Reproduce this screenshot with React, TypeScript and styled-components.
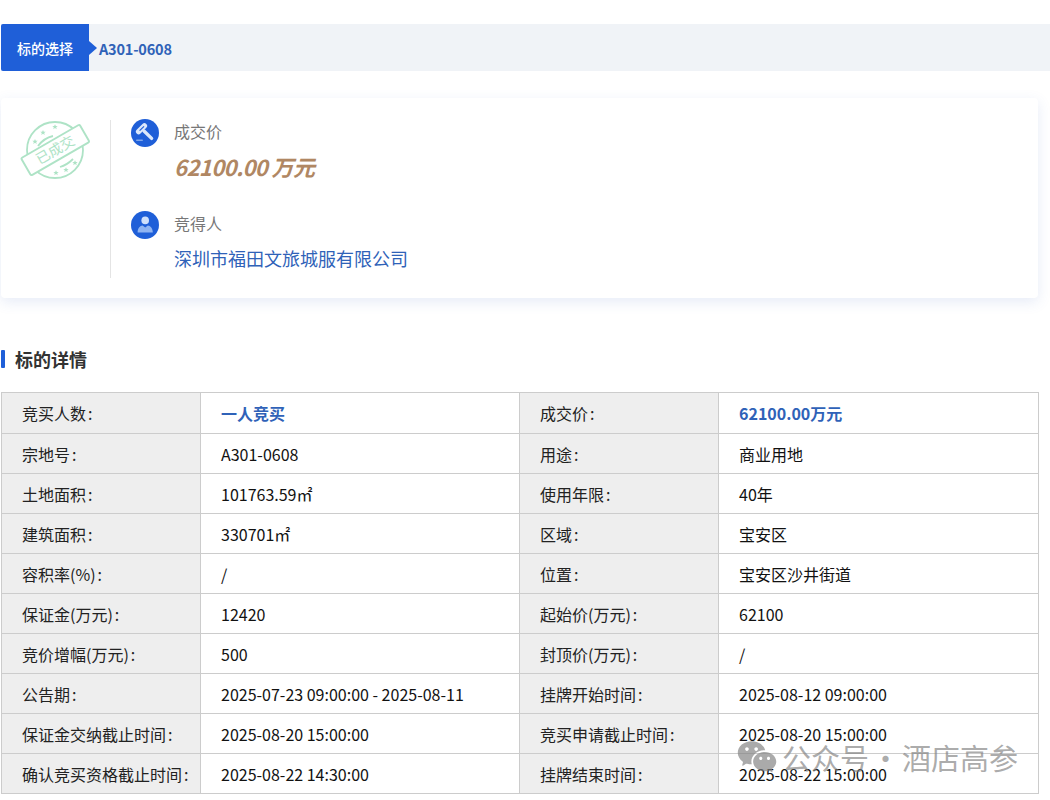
import React, { FC } from "react";
import styled, { createGlobalStyle } from "styled-components";
import { RiWechatFill } from "react-icons/ri";

const GlobalStyle = createGlobalStyle`
  html, body {
    margin: 0;
    padding: 0;
    background: #fff;
    font-family: "Noto Sans CJK SC", "Noto Sans", sans-serif;
  }
`;

const Page = styled.div`
  position: relative;
  width: 1050px;
  height: 800px;
  box-sizing: border-box;
  padding: 24px 0 0 1px;
  overflow: hidden;
`;

const TabBar = styled.div`
  display: flex;
  align-items: center;
  height: 47px;
  background: #f0f3f7;
`;

const TabLabel = styled.div`
  position: relative;
  display: flex;
  align-items: center;
  justify-content: center;
  width: 88px;
  height: 100%;
  background: #1f5fd8;
  border-radius: 2px 0 0 2px;
  color: #fff;
  font-size: 14px;
  font-weight: 500;
  &::after {
    content: "";
    position: absolute;
    left: 100%;
    top: 50%;
    margin-top: -7px;
    border-left: 8px solid #1f5fd8;
    border-top: 7px solid transparent;
    border-bottom: 7px solid transparent;
  }
`;

const TabValue = styled.div`
  margin: 2px 0 0 10px;
  color: #2f62b8;
  font-size: 14.5px;
  font-weight: 700;
  letter-spacing: -0.2px;
`;

const ResultCard = styled.div`
  display: flex;
  width: 1037px;
  height: 200px;
  margin-top: 27px;
  box-sizing: border-box;
  padding: 22px 0 20px;
  background: #fff;
  border-radius: 4px;
  box-shadow: 0 4px 14px rgba(60, 100, 190, 0.13);
`;

const StampBox = styled.div`
  flex: none;
  width: 110px;
  box-sizing: border-box;
  padding-left: 18px;
  border-right: 1px solid #e4e4e4;
`;

const Facts = styled.div`
  display: flex;
  flex-direction: column;
  gap: 31px;
  padding-left: 20px;
  margin-top: -1px;
`;

const Fact = styled.div`
  display: grid;
  grid-template-columns: 28px 1fr;
  column-gap: 15px;
  row-gap: 6px;
  align-items: start;
`;

const FactIcon = styled.svg`
  width: 28px;
  height: 28px;
  display: block;
`;

const FactLabel = styled.div`
  color: #777;
  font-size: 16px;
  line-height: 24px;
`;

const Price = styled.div`
  grid-column: 2;
  margin-top: -1px;
  color: #b08763;
  font-size: 22px;
  font-weight: 700;
  font-style: italic;
  line-height: 28px;
  letter-spacing: -0.6px;
`;

const Winner = styled.div`
  grid-column: 2;
  color: #2f62b8;
  font-size: 18px;
  line-height: 26px;
`;

const SectionTitle = styled.h2`
  margin: 48px 0 20px;
  padding-left: 14px;
  position: relative;
  color: #333;
  font-size: 18px;
  font-weight: 700;
  line-height: 26px;
  &::before {
    content: "";
    position: absolute;
    left: 0;
    top: 4px;
    width: 4px;
    height: 18px;
    border-radius: 1px;
    background: #1f5fd8;
  }
`;

const Table = styled.table`
  width: 1038px;
  border-collapse: collapse;
  table-layout: fixed;
  font-size: 16px;
  color: #222;
  border: 1px solid #ccc;
`;

const Row = styled.tr<{ $tall?: boolean }>`
  height: ${(p) => (p.$tall ? "41px" : "40px")};
`;

const Key = styled.td`
  padding: 0 0 0 20px;
  background: #eee;
  border: 1px solid #ccc;
  white-space: nowrap;
`;

const Colon = styled.span`
  margin-left: 2px;
`;

const Val = styled.td<{ $accent?: boolean }>`
  padding: 0 0 0 20px;
  border: 1px solid #ccc;
  white-space: nowrap;
  color: ${(p) => (p.$accent ? "#2f62b8" : "#111")};
  font-weight: ${(p) => (p.$accent ? 700 : 400)};
`;

const Watermark = styled.div`
  position: absolute;
  left: 739px;
  top: 736px;
  display: flex;
  align-items: center;
  color: rgba(130, 130, 130, 0.68);
  font-size: 29px;
  line-height: 38px;
  word-spacing: -4.5px;
  white-space: nowrap;
`;

const WechatIcon = styled(RiWechatFill)`
  width: 42px;
  height: 42px;
  margin: 0 4px 0 -3px;
`;

const rows: [string, string, string, string][] = [
  ["竞买人数", "一人竞买", "成交价", "62100.00万元"],
  ["宗地号", "A301-0608", "用途", "商业用地"],
  ["土地面积", "101763.59㎡", "使用年限", "40年"],
  ["建筑面积", "330701㎡", "区域", "宝安区"],
  ["容积率(%)", "/", "位置", "宝安区沙井街道"],
  ["保证金(万元)", "12420", "起始价(万元)", "62100"],
  ["竞价增幅(万元)", "500", "封顶价(万元)", "/"],
  ["公告期", "2025-07-23 09:00:00 - 2025-08-11", "挂牌开始时间", "2025-08-12 09:00:00"],
  ["保证金交纳截止时间", "2025-08-20 15:00:00", "竞买申请截止时间", "2025-08-20 15:00:00"],
  ["确认竞买资格截止时间", "2025-08-22 14:30:00", "挂牌结束时间", "2025-08-22 15:00:00"],
];

const starPoints = "0,-2.8 0.8,-0.9 2.7,-0.9 1.2,0.3 1.7,2.2 0,1.1 -1.7,2.2 -1.2,0.3 -2.7,-0.9 -0.8,-0.9";
const stars = [
  [16, 21.7],
  [24, 12.7],
  [36, 7],
  [37, 53],
  [47, 50],
  [56, 43],
];

const Stamp: FC = () => (
  <svg width="72" height="66" viewBox="0 0 72 66">
    <g fill="none" stroke="#aee3c6" strokeWidth="1.8">
      <circle cx="36" cy="30" r="28" />
      <path d="M19 26 Q25 18 34 16" />
      <path d="M41 47 Q48 45 54 39" />
    </g>
    {stars.map(([x, y]) => (
      <polygon key={`${x}-${y}`} points={starPoints} fill="#aee3c6" transform={`translate(${x} ${y})`} />
    ))}
    <g transform="rotate(-30 36.3 30)">
      <rect x="2.5" y="20" width="67.5" height="20" rx="1.5" fill="#fff" stroke="#aee3c6" strokeWidth="1.9" />
      <text
        x="36.3"
        y="35"
        textAnchor="middle"
        fontSize="14"
        fill="#aee3c6"
        fontFamily="'Noto Sans CJK SC', sans-serif"
      >
        已成交
      </text>
    </g>
  </svg>
);

const GavelIcon: FC = () => (
  <FactIcon viewBox="0 0 28 28">
    <circle cx="14" cy="14" r="14" fill="#1f5fd8" />
    <path d="M7.6 12.6 L13.4 6.8" stroke="#dbe8fb" strokeWidth="5.4" strokeLinecap="round" />
    <path d="M13 12 L20.6 19.4" stroke="#dbe8fb" strokeWidth="3.4" strokeLinecap="round" />
    <path d="M8.6 11.6 L13 7.4" stroke="#1f5fd8" strokeWidth="1.2" />
    <rect x="5" y="20.4" width="7" height="1.6" rx="0.8" fill="#7fa6ea" />
  </FactIcon>
);

const PersonIcon: FC = () => (
  <FactIcon viewBox="0 0 28 28">
    <circle cx="14" cy="14" r="14" fill="#1f5fd8" />
    <circle cx="14.2" cy="9.4" r="3.8" fill="#cfe0fb" />
    <path d="M6.6 21.6 C6.6 17 9 14.6 11.6 14.4 L14.2 16.4 L16.8 14.4 C19.4 14.6 21.8 17 21.8 21.6 Z" fill="#8fb4f2" />
  </FactIcon>
);

export default function App() {
  return (
    <>
      <GlobalStyle />
      <Page>
        <TabBar>
          <TabLabel>标的选择</TabLabel>
          <TabValue>A301-0608</TabValue>
        </TabBar>

        <ResultCard>
          <StampBox>
            <Stamp />
          </StampBox>
          <Facts>
            <Fact>
              <GavelIcon />
              <FactLabel>成交价</FactLabel>
              <Price>62100.00 万元</Price>
            </Fact>
            <Fact>
              <PersonIcon />
              <FactLabel>竞得人</FactLabel>
              <Winner>深圳市福田文旅城服有限公司</Winner>
            </Fact>
          </Facts>
        </ResultCard>

        <SectionTitle>标的详情</SectionTitle>

        <Table>
          <colgroup>
            <col style={{ width: 199 }} />
            <col style={{ width: 319 }} />
            <col style={{ width: 199 }} />
            <col />
          </colgroup>
          <tbody>
            {rows.map((r, i) => (
              <Row key={r[0]} $tall={i === 0}>
                <Key>
                  {r[0]}
                  <Colon>:</Colon>
                </Key>
                <Val $accent={i === 0}>{r[1]}</Val>
                <Key>
                  {r[2]}
                  <Colon>:</Colon>
                </Key>
                <Val $accent={i === 0}>{r[3]}</Val>
              </Row>
            ))}
          </tbody>
        </Table>

        <Watermark>
          <WechatIcon />
          公众号 · 酒店高参
        </Watermark>
      </Page>
    </>
  );
}
